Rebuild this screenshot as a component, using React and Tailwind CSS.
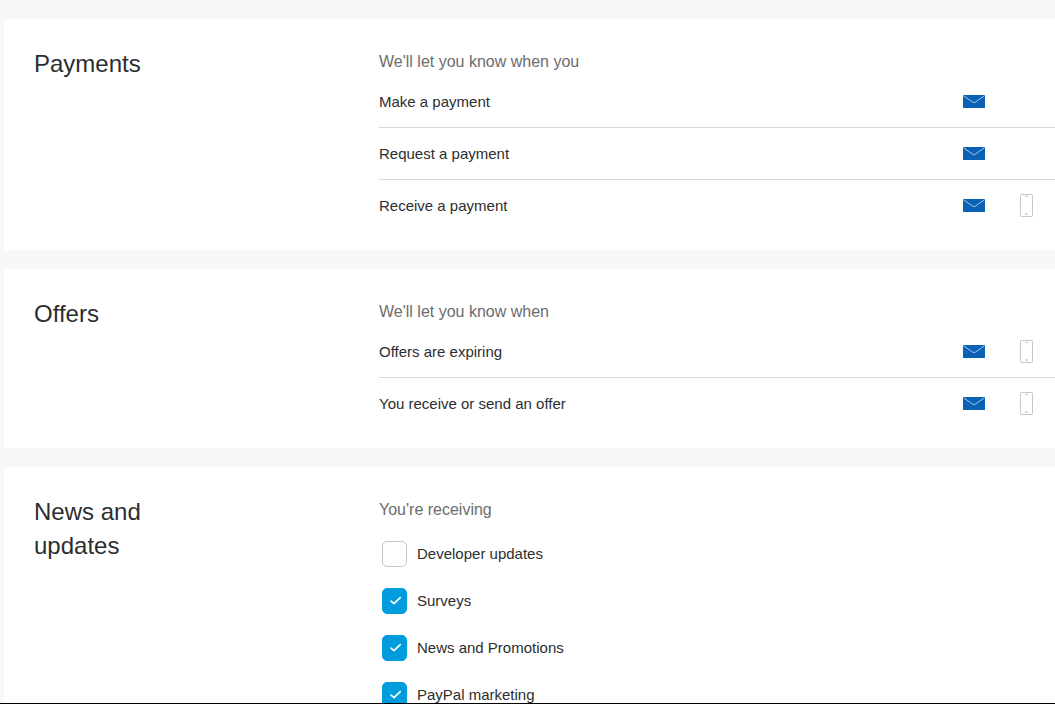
import { useState } from "react";

function EnvelopeIcon() {
  return (
    <svg width="22" height="13" viewBox="0 0 22 13" aria-hidden="true">
      <rect width="22" height="13" rx="0.5" fill="#0b62b4" />
      <path d="M0.6 0.8 L9.6 7.1 Q11 8 12.4 7.1 L21.4 0.8" fill="none" stroke="#a3c6e8" strokeWidth="1" />
    </svg>
  );
}

function PhoneIcon() {
  return (
    <svg width="13" height="23" viewBox="0 0 13 23" aria-hidden="true">
      <rect x="0.5" y="0.5" width="12" height="22" rx="0.8" fill="none" stroke="#c8c8c8" />
      <path d="M5 2.5 H8" stroke="#c8c8c8" strokeWidth="1" />
      <rect x="5.5" y="19" width="2" height="2" fill="#c8c8c8" />
    </svg>
  );
}

function Section({ title, intro, children }) {
  return (
    <section className="flex shrink-0 bg-white pt-7 pb-[18px] pl-[30px]">
      <div className="w-[345px] shrink-0">
        <h2 className="w-40 text-2xl leading-[34px] text-[#2c2e2f]">{title}</h2>
      </div>
      <div className="min-w-0 flex-1 pt-[3px]">
        <p className="mb-0.5 text-base leading-6 text-[#6c6c6c]">{intro}</p>
        {children}
      </div>
    </section>
  );
}

function AlertList({ items }) {
  return (
    <ul>
      {items.map(({ label, phone }) => (
        <li
          key={label}
          className="flex h-[52px] items-center gap-[35px] border-b border-[#d9d9d9] pr-[22px] last:border-transparent"
        >
          <span className="flex-1 text-[15px] leading-5 text-[#2c2e2f]">{label}</span>
          <button type="button" aria-label={`Email: ${label}`}>
            <EnvelopeIcon />
          </button>
          {phone ? (
            <button type="button" aria-label={`Phone: ${label}`}>
              <PhoneIcon />
            </button>
          ) : (
            <span className="w-[13px]" />
          )}
        </li>
      ))}
    </ul>
  );
}

function CheckOption({ label, initial }) {
  const [checked, setChecked] = useState(initial);
  return (
    <label className="flex items-center gap-2.5 text-[15px] leading-5 text-[#2c2e2f]">
      <span className="relative flex h-[26px] w-[25px]">
        <input
          type="checkbox"
          checked={checked}
          onChange={(e) => setChecked(e.target.checked)}
          className="h-full w-full appearance-none rounded-[5px] border border-[#c4c7c9] bg-white checked:border-[#009cde] checked:bg-[#009cde]"
        />
        {checked && (
          <svg
            className="pointer-events-none absolute inset-0"
            width="25"
            height="26"
            viewBox="0 0 25 26"
            aria-hidden="true"
          >
            <path
              d="M9 13.2 L12 15.6 L18.2 9.6"
              fill="none"
              stroke="#fff"
              strokeWidth="1.7"
              strokeLinecap="round"
              strokeLinejoin="round"
            />
          </svg>
        )}
      </span>
      {label}
    </label>
  );
}

const paymentAlerts = [
  { label: "Make a payment" },
  { label: "Request a payment" },
  { label: "Receive a payment", phone: true },
];

const offerAlerts = [
  { label: "Offers are expiring", phone: true },
  { label: "You receive or send an offer", phone: true },
];

const newsOptions = [
  { label: "Developer updates", initial: false },
  { label: "Surveys", initial: true },
  { label: "News and Promotions", initial: true },
  { label: "PayPal marketing", initial: true },
];

export default function App() {
  return (
    <main className="flex h-screen flex-col gap-[19px] overflow-hidden border-b border-black bg-[#f7f8fa] pt-[19px] pl-1 font-['Liberation_Sans',Arial,sans-serif]">
      <Section title="Payments" intro="We'll let you know when you">
        <AlertList items={paymentAlerts} />
      </Section>
      <Section title="Offers" intro="We'll let you know when">
        <AlertList items={offerAlerts} />
      </Section>
      <Section title="News and updates" intro="You're receiving">
        <div className="flex flex-col gap-[21px] pt-[17px] pl-[3px]">
          {newsOptions.map((option) => (
            <CheckOption key={option.label} {...option} />
          ))}
        </div>
      </Section>
    </main>
  );
}
